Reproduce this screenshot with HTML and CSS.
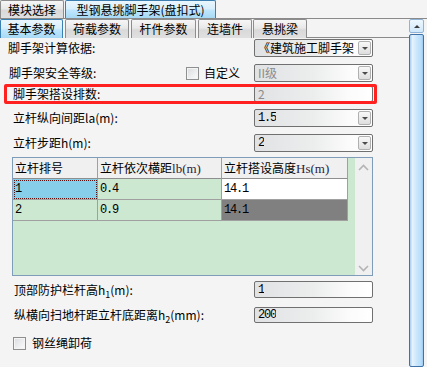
FILE: index.html
```html
<!DOCTYPE html>
<html lang="zh-CN">
<head>
  <meta charset="UTF-8">
  <title>型钢悬挑脚手架(盘扣式)</title>
  <link rel="stylesheet" href="styles.css">
</head>
<body>
<div class="window">

  <div class="top-tabs">
    <div class="tab t-module">模块选择</div>
    <div class="tab tab-on t-name">型钢悬挑脚手架(盘扣式)</div>
  </div>

  <div class="frame">
    <div class="main">
      <div class="sub-tabs">
        <div class="tab tab-on w1">基本参数</div>
        <div class="tab w2">荷载参数</div>
        <div class="tab w3">杆件参数</div>
        <div class="tab w4">连墙件</div>
        <div class="tab w5">悬挑梁</div>
        <div class="tab-fill"></div>
      </div>

      <div class="content">
        <div class="row r1">
          <span class="label">脚手架计算依据:</span>
          <div class="ctrl"><span class="val">《建筑施工脚手架</span><i class="drop"></i></div>
        </div>

        <div class="row r2">
          <span class="label">脚手架安全等级:</span>
          <span class="check-wrap"><i class="check"></i>自定义</span>
          <div class="ctrl ctrl-after"><span class="val off">II级</span><i class="drop"></i></div>
        </div>

        <div class="row r3">
          <span class="label">脚手架搭设排数:</span>
          <div class="ctrl"><span class="val off">2</span></div>
          <div class="mark"></div>
        </div>

        <div class="row r4">
          <span class="label">立杆纵向间距la(m):</span>
          <div class="ctrl"><span class="val num">1.5</span><i class="drop"></i></div>
        </div>

        <div class="row r5">
          <span class="label">立杆步距h(m):</span>
          <div class="ctrl"><span class="val num">2</span><i class="drop"></i></div>
        </div>

        <div class="grid-box">
          <div class="grid">
            <div class="grid-row head">
              <div class="cell c1">立杆排号</div>
              <div class="cell c2">立杆依次横距<span class="unit">lb(m)</span></div>
              <div class="cell c3">立杆搭设高度<span class="unit">Hs(m)</span></div>
            </div>
            <div class="grid-row">
              <div class="cell c1 num sel">1</div>
              <div class="cell c2 num">0.4</div>
              <div class="cell c3 num white">14.1</div>
            </div>
            <div class="grid-row">
              <div class="cell c1 num">2</div>
              <div class="cell c2 num">0.9</div>
              <div class="cell c3 num dark">14.1</div>
            </div>
          </div>
          <div class="gscroll">
            <svg width="11" height="7" viewBox="0 0 11 7"><polyline points="1,6 5.5,1.5 10,6" fill="none" stroke="#b4b4b4" stroke-width="1.6"/></svg>
            <svg width="11" height="7" viewBox="0 0 11 7"><polyline points="1,1 5.5,5.5 10,1" fill="none" stroke="#b4b4b4" stroke-width="1.6"/></svg>
          </div>
        </div>

        <div class="row r6">
          <span class="label">顶部防护栏杆高h<sub>1</sub>(m):</span>
          <div class="ctrl"><span class="val num">1</span></div>
        </div>

        <div class="row r7">
          <span class="label">纵横向扫地杆距立杆底距离h<sub>2</sub>(mm):</span>
          <div class="ctrl"><span class="val num">200</span></div>
        </div>

        <div class="row r8">
          <i class="check"></i><span class="check-text">钢丝绳卸荷</span>
        </div>
      </div>
    </div>

    <div class="vscroll">
      <div class="vs-btn"><i class="up"></i></div>
      <div class="vs-thumb"></div>
    </div>
  </div>

</div>
</body>
</html>
```

FILE: styles.css
```css
/* ----- 全体 ----- */
body {
  margin: 0;
  background: #f4f4f4;
  font: 12px/16px "Noto Sans CJK SC", sans-serif;
  color: #000;
}
.window {
  width: 427px;
  height: 367px;
  overflow: hidden;
}

/* ----- タブ ----- */
.top-tabs,
.sub-tabs {
  display: flex;
}
.top-tabs {
  height: 18px;
}
.tab {
  box-sizing: border-box;
  height: 18px;
  margin-right: 2px;
  border: 1px solid #8d8d8d;
  border-bottom: none;
  border-radius: 2px 2px 0 0;
  background: linear-gradient(#f6f6f6, #e8e8e8 45%, #d9d9d9 55%, #e0e0e0);
  text-align: center;
  line-height: 17px;
  white-space: nowrap;
}
.tab-on {
  border-color: #3c7fb1;
  background: linear-gradient(#eaf6fd, #d9effc 45%, #bee6fd 55%, #a7d9f5);
}
.t-module { width: 64px; margin-right: 1px; }
.t-name { width: 151px; }

.frame {
  display: flex;
  height: 348px;
  border-top: 1px solid #8a8a8a;
}
.main {
  width: 409px;
}
.sub-tabs {
  height: 19px;
}
.sub-tabs .tab {
  height: 19px;
  line-height: 18px;
}
.w1 { width: 63px; }
.w2 { width: 64px; }
.w3 { width: 65px; }
.w4 { width: 54px; margin-right: 1px; }
.w5 { width: 54px; margin-right: 0; }
.tab-fill {
  flex: 1;
  box-sizing: border-box;
  height: 19px;
  border-bottom: 1px solid #8a8a8a;
}

/* ----- 入力行 ----- */
.content {
  padding-right: 36px;
}
.row {
  position: relative;
  display: flex;
  align-items: center;
  height: 18px;
}
.label {
  padding-left: 13px;
  white-space: nowrap;
}
.label sub {
  font-size: 9px;
  line-height: 0;
}
.r1 { margin-top: 1px; }
.r1 .label { padding-left: 8px; }
.r2 { margin-top: 7px; }
.r2 .label { padding-left: 9px; }
.r3 { margin-top: 4px; height: 16px; }
.r4 { margin-top: 7px; }
.r5 { margin-top: 7px; }
.r6 { margin-top: 5px; height: 17px; }
.r6 .label, .r7 .label { padding-left: 14px; }
.r7 { margin-top: 9px; height: 16px; }
.r8 { margin-top: 14px; height: 12px; padding-left: 13px; }

.ctrl {
  box-sizing: border-box;
  display: flex;
  align-items: center;
  width: 119px;
  height: 100%;
  margin-left: auto;
  padding-left: 3px;
  border: 1px solid #707070;
  border-radius: 2px;
  background: linear-gradient(to right, #e1e2e4, #eceded 50%, #fbfbfb 80%, #fff);
  overflow: hidden;
}
.ctrl-after {
  margin-left: 14px;
}
.val {
  white-space: nowrap;
  overflow: hidden;
}
.off {
  color: #8c8c8c;
}
.num {
  font-family: "Liberation Mono", monospace;
  letter-spacing: -1.2px;
}
.drop {
  box-sizing: border-box;
  display: flex;
  align-items: center;
  justify-content: center;
  flex: none;
  width: 13px;
  height: 14px;
  margin-left: auto;
  margin-right: 1px;
  border: 1px solid #b0b0b0;
  border-radius: 2px;
  background: linear-gradient(#f8f8f8, #dedede);
}
.drop::after {
  content: "";
  border: 3px solid transparent;
  border-top: 3px solid #4b4b4b;
  border-bottom: 0;
}

/* 強調枠（注釈） */
.mark {
  position: absolute;
  left: 4px;
  right: -4px;
  top: -2px;
  bottom: -2px;
  border: 3px solid #ff2020;
  border-radius: 2px;
}

/* チェックボックス */
.check-wrap {
  display: flex;
  align-items: center;
  margin-left: auto;
}
.check {
  box-sizing: border-box;
  display: inline-block;
  width: 13px;
  height: 13px;
  margin-right: 5px;
  border: 1px solid #8e8f8f;
  background: linear-gradient(135deg, #d9dbde, #f2f3f4 70%, #fbfbfb);
  box-shadow: inset 0 0 0 1px #f4f4f4;
}
.check-text {
  margin-left: 1px;
}

/* ----- 表 ----- */
.grid-box {
  box-sizing: border-box;
  display: flex;
  width: 361px;
  height: 119px;
  margin: 5px 0 0 12px;
  border: 1px solid #7f9db9;
  background: #cde8d0;
}
.grid {
  flex: 1;
}
.grid-row {
  display: flex;
  height: 21px;
}
.cell {
  box-sizing: border-box;
  height: 21px;
  padding-left: 2px;
  border-right: 1px solid #a0a0a0;
  border-bottom: 1px solid #a0a0a0;
  line-height: 20px;
  white-space: nowrap;
}
.head .cell {
  background: #f0f0f0;
  border-bottom-color: #8e8e8e;
}
.c1 { width: 85px; }
.c2 { width: 124px; }
.c3 { width: 126px; }
.unit {
  font-family: "Liberation Serif", serif;
  font-size: 13px;
  color: #2a2440;
}
.sel {
  background: #87ceeb;
  outline: 1px dotted #5a1010;
  outline-offset: -2px;
}
.white { background: #fff; }
.dark { background: #808080; }

.gscroll {
  display: flex;
  flex-direction: column;
  justify-content: space-between;
  align-items: center;
  width: 17px;
  padding: 6px 0 3px;
  box-sizing: border-box;
  background: #f0f0f0;
}

/* ----- 右スクロールバー ----- */
.vscroll {
  display: flex;
  flex-direction: column;
  width: 15px;
}
.vs-btn {
  box-sizing: border-box;
  display: flex;
  align-items: center;
  justify-content: center;
  height: 14px;
  border: 1px solid #8fb3d6;
  border-radius: 2px;
  background: linear-gradient(#eef7fe, #cfe8fb);
}
.up {
  border: 3px solid transparent;
  border-bottom: 3px solid #3c3c3c;
  border-top: 0;
}
.vs-thumb {
  flex: 1;
  margin-top: 1px;
  border: 1px solid #3f73a8;
  border-radius: 2px;
  background: linear-gradient(to right, #a7cdee, #e6f4fe 20%, #cbe7fc 50%, #b7ddfb 85%, #9cc9f0);
}
```
